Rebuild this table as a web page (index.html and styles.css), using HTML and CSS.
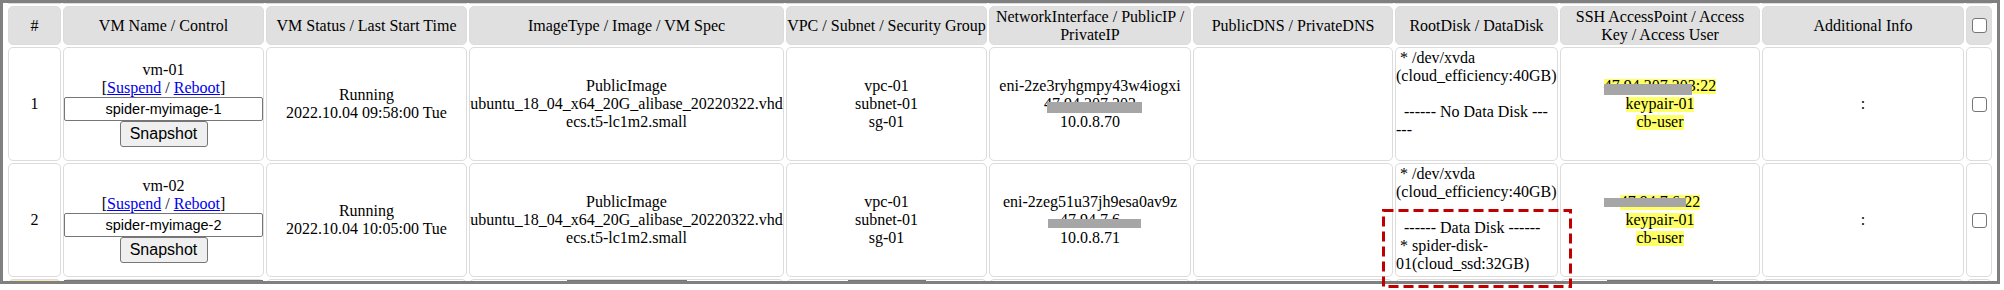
FILE: index.html
```html
<!DOCTYPE html>
<html>
<head>
<meta charset="utf-8">
<link rel="stylesheet" href="styles.css">
</head>
<body>
<div class="frame">
<table class="grid">
<colgroup>
<col class="w1"><col class="w2"><col class="w3"><col class="w4"><col class="w5"><col class="w6"><col class="w7"><col class="w8"><col class="w9"><col class="w10"><col class="w11">
</colgroup>
<tr class="stub"><td></td><td></td><td></td><td></td><td></td><td></td><td></td><td></td><td></td><td></td><td></td></tr>
<tr class="head">
<th>#</th>
<th>VM Name / Control</th>
<th>VM Status / Last Start Time</th>
<th>ImageType / Image / VM Spec</th>
<th>VPC / Subnet / Security Group</th>
<th>NetworkInterface / PublicIP /<br>PrivateIP</th>
<th>PublicDNS / PrivateDNS</th>
<th>RootDisk / DataDisk</th>
<th>SSH AccessPoint / Access<br>Key / Access User</th>
<th>Additional Info</th>
<th><input type="checkbox" class="chk"></th>
</tr>
<tr class="vm">
<td>1</td>
<td>vm-01<br>[<a href="#">Suspend</a> / <a href="#">Reboot</a>]<input type="text" class="snapname" value="spider-myimage-1"><button class="snapbtn">Snapshot</button></td>
<td>Running<br>2022.10.04 09:58:00 Tue</td>
<td>PublicImage<br>ubuntu_18_04_x64_20G_alibase_20220322.vhd<br>ecs.t5-lc1m2.small</td>
<td>vpc-01<br>subnet-01<br>sg-01</td>
<td>eni-2ze3ryhgmpy43w4iogxi<br><span class="redact ra">47.94.207.203</span><br>10.0.8.70</td>
<td></td>
<td class="disk"><div class="diskbox"> * /dev/xvda
(cloud_efficiency:40GB)

  ------ No Data Disk ---
---</div></td>
<td><span class="hl redact rc">47.94.207.203:22</span><br><span class="hl">keypair-01</span><br><span class="hl">cb-user</span></td>
<td>:</td>
<td><input type="checkbox" class="chk"></td>
</tr>
<tr class="vm">
<td>2</td>
<td>vm-02<br>[<a href="#">Suspend</a> / <a href="#">Reboot</a>]<input type="text" class="snapname" value="spider-myimage-2"><button class="snapbtn">Snapshot</button></td>
<td>Running<br>2022.10.04 10:05:00 Tue</td>
<td>PublicImage<br>ubuntu_18_04_x64_20G_alibase_20220322.vhd<br>ecs.t5-lc1m2.small</td>
<td>vpc-01<br>subnet-01<br>sg-01</td>
<td>eni-2zeg51u37jh9esa0av9z<br><span class="redact rb">47.94.7.6</span><br>10.0.8.71</td>
<td></td>
<td class="disk"><div class="diskbox"> * /dev/xvda
(cloud_efficiency:40GB)

  ------ Data Disk ------
 * spider-disk-
01(cloud_ssd:32GB)</div></td>
<td><span class="hl redact rd">47.94.7.6:22</span><br><span class="hl">keypair-01</span><br><span class="hl">cb-user</span></td>
<td>:</td>
<td><input type="checkbox" class="chk"></td>
</tr>
<tr class="next">
<td class="sel"></td>
<td><div class="edge full"></div></td>
<td></td>
<td><div class="edge e4"></div></td>
<td><div class="edge e5"></div></td>
<td></td>
<td></td>
<td></td>
<td><div class="edge e9"></div></td>
<td></td>
<td></td>
</tr>
</table>
</div>
<svg class="annot" width="196" height="84" viewBox="0 0 196 84">
<rect x="2.5" y="2.5" width="187" height="76" fill="none" stroke="#c00000" stroke-width="3" stroke-dasharray="10 5"/>
</svg>
</body>
</html>
```
FILE: styles.css
```css
body {
  margin: 0;
  background: #fff;
  font-family: "Liberation Serif", "Times New Roman", serif;
  font-size: 16px;
  color: #000;
  position: relative;
  height: 290px;
}

.frame {
  width: 2000px;
  height: 284px;
  box-sizing: border-box;
  border: 3px solid #808080;
  overflow: hidden;
  padding-left: 3px;
}

.grid {
  border-collapse: separate;
  border-spacing: 2px;
  table-layout: fixed;
  width: 1988px;
  margin-top: -2px;
  line-height: normal;
}

.w1 { width: 53px; }
.w2 { width: 201px; }
.w3 { width: 201px; }
.w4 { width: 315px; }
.w5 { width: 201px; }
.w6 { width: 202px; }
.w7 { width: 200px; }
.w8 { width: 163px; }
.w9 { width: 200px; }
.w10 { width: 202px; }
.w11 { width: 26px; }

.grid td,
.grid th {
  box-sizing: border-box;
  border: 1px solid #dcdcdc;
  border-radius: 5px;
  padding: 0;
  text-align: center;
  vertical-align: middle;
  white-space: nowrap;
  font-weight: normal;
}

.stub { height: 1px; }
.stub td {
  border-top: none;
  border-radius: 0 0 5px 5px;
  padding: 0;
  line-height: 0;
}

.head { height: 39px; }
.head th { background: #e0e0e0; }

.vm { height: 114px; }
.next { height: 40px; }

a {
  color: #0000ee;
  text-decoration: underline;
}

.snapname {
  display: block;
  box-sizing: border-box;
  width: 100%;
  height: 24px;
  margin: 0;
  padding: 0;
  border: 1px solid #767676;
  border-radius: 2px;
  font-family: "Liberation Sans", Arial, sans-serif;
  font-size: 14.5px;
  text-align: center;
  color: #000;
  background: #fff;
}

.snapbtn {
  display: block;
  box-sizing: border-box;
  width: 88px;
  height: 26px;
  margin: 0 auto;
  padding: 0;
  border: 1px solid #767676;
  border-radius: 3px;
  background: #efefef;
  font-family: "Liberation Sans", Arial, sans-serif;
  font-size: 16px;
  color: #000;
}

.chk {
  -webkit-appearance: none;
  appearance: none;
  display: block;
  box-sizing: border-box;
  width: 15px;
  height: 15px;
  margin: 0 auto;
  border: 1px solid #767676;
  border-radius: 3px;
  background: #fff;
}

.grid td.disk {
  text-align: left;
  vertical-align: top;
}

.diskbox {
  white-space: pre;
  padding: 1px 0;
  text-align: left;
}

.hl {
  background: linear-gradient(#ffff66, #ffff66) 0 2px / 100% 15px no-repeat;
}

.redact { position: relative; }
.redact::after {
  content: "";
  position: absolute;
  background: #a6a6a6;
}
.ra::after { left: 3px; top: 6.5px; width: 95px; height: 11px; }
.rb::after { left: -12px; top: 8px; width: 93px; height: 9px; }
.rc::after { left: 0; top: 7px; width: 88px; height: 11px; }
.rd::after { left: -16px; top: 5px; width: 82px; height: 9px; }

.grid .next td { vertical-align: top; }
.grid .next td.sel { background: #ffe9b3; }
.edge {
  height: 20px;
  box-sizing: border-box;
  border: 1px solid #767676;
  margin: 0 auto;
}
.edge.full { width: 100%; }
.e4 { width: 120px; }
.e5 { width: 78px; }
.e9 { width: 106px; }

.annot {
  position: absolute;
  left: 1381px;
  top: 208px;
}
```
